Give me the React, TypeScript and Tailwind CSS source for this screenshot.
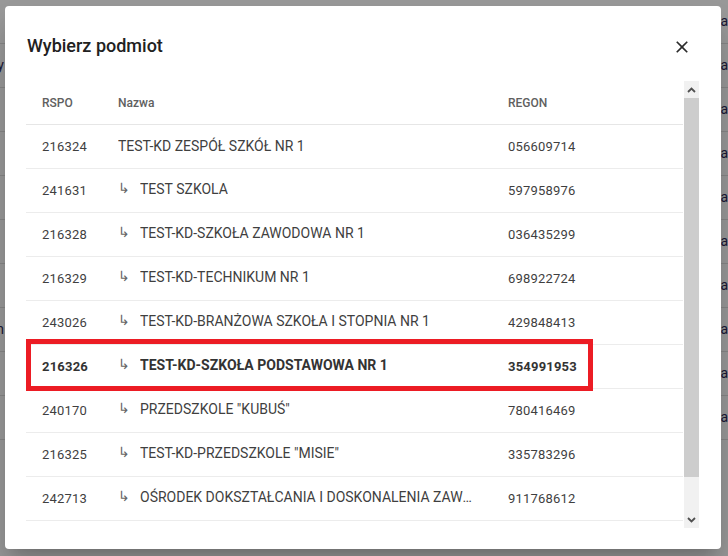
import React from 'react';

const rows = [
  { rspo: '216324', name: 'TEST-KD ZESPÓŁ SZKÓŁ NR 1', regon: '056609714', child: false },
  { rspo: '241631', name: 'TEST SZKOLA', regon: '597958976', child: true },
  { rspo: '216328', name: 'TEST-KD-SZKOŁA ZAWODOWA NR 1', regon: '036435299', child: true },
  { rspo: '216329', name: 'TEST-KD-TECHNIKUM NR 1', regon: '698922724', child: true },
  { rspo: '243026', name: 'TEST-KD-BRANŻOWA SZKOŁA I STOPNIA NR 1', regon: '429848413', child: true },
  { rspo: '216326', name: 'TEST-KD-SZKOŁA PODSTAWOWA NR 1', regon: '354991953', child: true, active: true },
  { rspo: '240170', name: 'PRZEDSZKOLE "KUBUŚ"', regon: '780416469', child: true },
  { rspo: '216325', name: 'TEST-KD-PRZEDSZKOLE "MISIE"', regon: '335783296', child: true },
  { rspo: '242713', name: 'OŚRODEK DOKSZTAŁCANIA I DOSKONALENIA ZAWODOWEGO', regon: '911768612', child: true },
  { rspo: '216330', name: 'TEST-KD-LICEUM OGÓLNOKSZTAŁCĄCE NR 1', regon: '123456785', child: true },
];

// page behind the dialog, only its edges show
const bgRows = Array.from({ length: 10 }, (_, i) => i);

function Chevron({ down }: { down?: boolean }) {
  return (
    <svg width="9" height="6" viewBox="0 0 9 6" className={down ? 'rotate-180' : ''}>
      <path d="M1 5 L4.5 1.5 L8 5" fill="none" stroke="#505050" strokeWidth="1.8" />
    </svg>
  );
}

export default function App() {
  return (
    <div className="relative w-[728px] h-[556px] overflow-hidden bg-white font-['Roboto','Liberation_Sans',sans-serif]">
      {/* Background page */}
      <div className="flex flex-col">
        {bgRows.map((i) => (
          <div key={i} className="flex h-[44px] border-b border-[#e0e0e0] items-center text-[14px] text-[#2d2a5a]">
            <div className="w-[4px] overflow-hidden flex justify-end">
              <span className="whitespace-nowrap">{i === 1 ? 'Wy' : i === 7 ? 'Lin' : ''}</span>
            </div>
            <div className="w-[717px]" />
            <span className="whitespace-nowrap">a</span>
          </div>
        ))}
      </div>
      {/* Backdrop */}
      <div className="absolute inset-0 bg-black/40" />

      {/* Dialog */}
      <div className="absolute left-[5px] top-[6px] w-[716px] h-[543px] bg-white rounded-[4px] shadow-[0_11px_15px_-7px_rgba(0,0,0,0.2),0_24px_38px_3px_rgba(0,0,0,0.14)] flex flex-col">
        <div className="flex items-start justify-between pt-[28px] pb-[23px] pl-[22px] pr-[29px]">
          <h2 className="text-[18px] leading-[24px] font-medium text-[#212121]">Wybierz podmiot</h2>
          <svg width="20" height="20" viewBox="0 0 24 24" className="mt-[3px]">
            <path
              fill="#2b2b2b"
              d="M19 6.41L17.59 5 12 10.59 6.41 5 5 6.41 10.59 12 5 17.59 6.41 19 12 13.41 17.59 19 19 17.59 13.41 12z"
            />
          </svg>
        </div>

        <div className="flex h-[447px] ml-[21px] mr-[22px]">
          <div className="relative w-[657px] overflow-hidden">
            <div className="flex h-[44px] items-center border-b border-[#e6e6e6] text-[12px] font-medium text-[#606060]">
              <div className="w-[76px] pl-[16px]">RSPO</div>
              <div className="w-[390px] pl-[16px]">Nazwa</div>
              <div className="flex-1 pl-[16px]">REGON</div>
            </div>
            {rows.map((r) => (
              <div
                key={r.rspo}
                className={`flex h-[44px] items-center border-b border-[#ececec] text-[13px] tracking-[0.2px] ${
                  r.active ? 'font-bold text-[#333]' : 'text-[#3f3f3f]'
                }`}
              >
                <div className="w-[76px] pl-[16px]">{r.rspo}</div>
                <div className="w-[390px] pl-[16px] pr-[14px] flex items-center min-w-0 text-[14px] tracking-normal">
                  {r.child && (
                    <span className="w-[22px] shrink-0 text-[#666] font-normal text-[14px] -mt-[5px]">↳</span>
                  )}
                  <span className={`truncate ${r.child ? '-mt-[2px]' : ''}`}>{r.name}</span>
                </div>
                <div className="flex-1 pl-[16px]">{r.regon}</div>
              </div>
            ))}
            {/* highlight annotation */}
            <div className="absolute left-0 top-[258px] w-[567px] h-[52px] border-[5px] border-[#ec1c24]" />
          </div>

          {/* Scrollbar */}
          <div className="ml-[1px] w-[15px] h-[447px] bg-[#f1f1f1] flex flex-col">
            <div className="h-[17px] flex items-center justify-center">
              <Chevron />
            </div>
            <div className="h-[379px] bg-[#cdcdcd]" />
            <div className="flex-1" />
            <div className="h-[17px] flex items-center justify-center">
              <Chevron down />
            </div>
          </div>
        </div>
      </div>
    </div>
  );
}
